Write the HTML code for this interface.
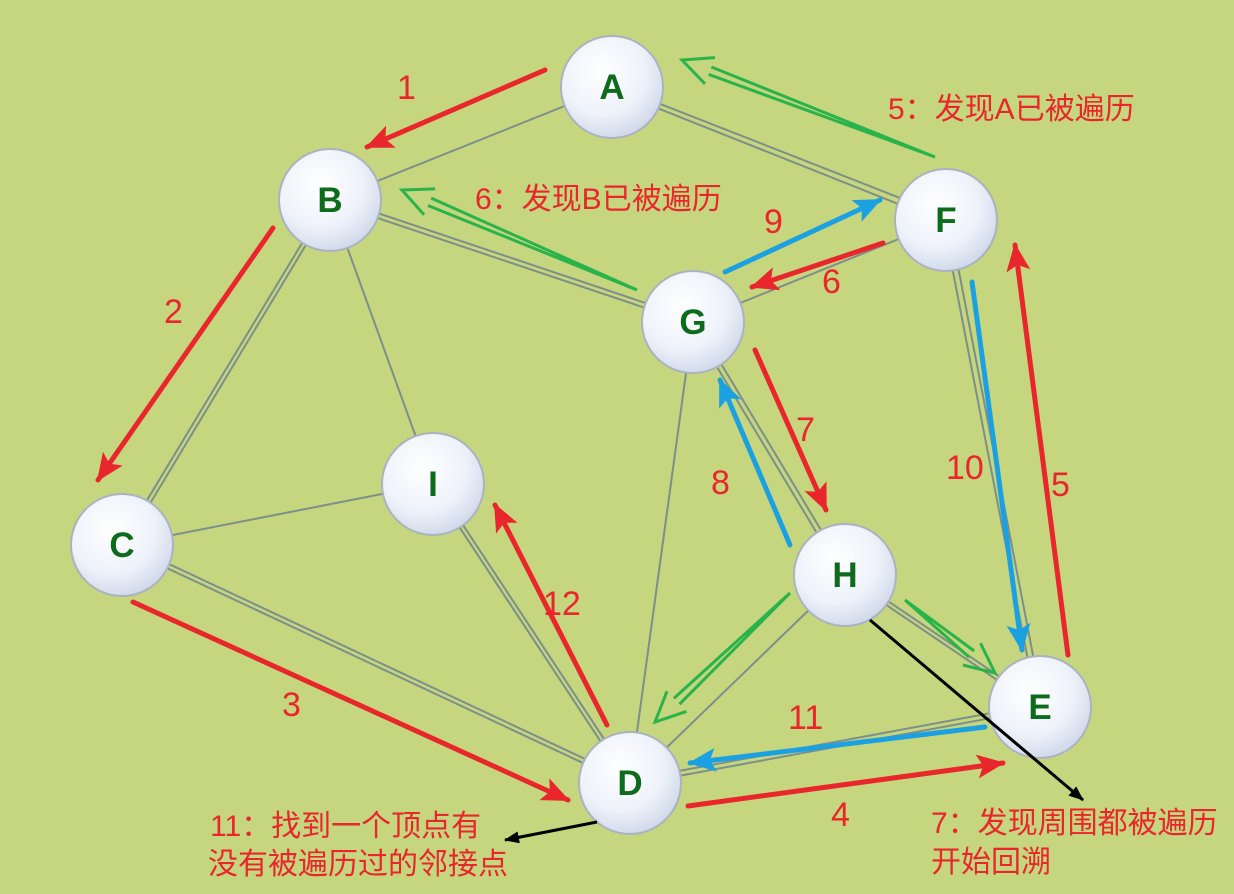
<!DOCTYPE html>
<html><head><meta charset="utf-8"><style>
html,body{margin:0;padding:0;background:#c6d67f;}
svg{display:block}
text{font-family:"Liberation Sans","Noto Sans CJK SC",sans-serif;}
</style></head><body>
<svg width="1234" height="894" viewBox="0 0 1234 894" xmlns="http://www.w3.org/2000/svg">
<defs>
<radialGradient id="ng" cx="0.4" cy="0.35" r="0.7">
<stop offset="0" stop-color="#ffffff"/><stop offset="0.6" stop-color="#eef2fa"/><stop offset="1" stop-color="#cdd6e8"/>
</radialGradient>
<marker id="mr" markerUnits="userSpaceOnUse" markerWidth="30" markerHeight="24" refX="26" refY="12" orient="auto"><path d="M0,0 L28,12 L0,24 L6,12 Z" fill="#e8262b"/></marker>
<marker id="mb" markerUnits="userSpaceOnUse" markerWidth="30" markerHeight="24" refX="26" refY="12" orient="auto"><path d="M0,0 L28,12 L0,24 L6,12 Z" fill="#1ba1e2"/></marker>
<marker id="mk" markerUnits="userSpaceOnUse" markerWidth="16" markerHeight="12" refX="14" refY="6" orient="auto"><path d="M0,0 L15,6 L0,12 Z" fill="#000"/></marker>
</defs>
<rect width="1234" height="894" fill="#c6d67f"/>
<g stroke="#7d8f8a" stroke-width="2" fill="none">
<line x1="612" y1="87" x2="330" y2="200"/>
<line x1="612" y1="85" x2="946" y2="216"/><line x1="612" y1="90" x2="946" y2="223"/>
<line x1="328" y1="200" x2="120" y2="545"/><line x1="333" y1="200" x2="125" y2="545"/>
<line x1="330" y1="200" x2="433" y2="484"/>
<line x1="330" y1="197" x2="693" y2="319"/><line x1="330" y1="202" x2="693" y2="324"/>
<line x1="122" y1="545" x2="433" y2="484"/>
<line x1="122" y1="542" x2="630" y2="780"/><line x1="122" y1="547" x2="630" y2="785"/>
<line x1="431" y1="484" x2="628" y2="783"/><line x1="436" y1="484" x2="633" y2="783"/>
<line x1="693" y1="322" x2="630" y2="783"/>
<line x1="693" y1="322" x2="946" y2="220"/>
<line x1="690" y1="322" x2="842" y2="575"/><line x1="696" y1="322" x2="848" y2="575"/>
<line x1="845" y1="575" x2="630" y2="783"/>
<line x1="845" y1="572" x2="1040" y2="704"/><line x1="845" y1="577" x2="1040" y2="709"/>
<line x1="943" y1="220" x2="1037" y2="707"/><line x1="949" y1="220" x2="1043" y2="707"/>
<line x1="630" y1="780" x2="1040" y2="704"/><line x1="630" y1="785" x2="1040" y2="709"/>
</g>
<g stroke="#e8262b" stroke-width="5" stroke-linecap="round" marker-end="url(#mr)">
<line x1="545" y1="70" x2="367" y2="147"/>
<line x1="273" y1="228" x2="98" y2="480"/>
<line x1="133" y1="602" x2="568" y2="800"/>
<line x1="688" y1="806" x2="1003" y2="763"/>
<line x1="1068" y1="655" x2="1015" y2="245"/>
<line x1="883" y1="243" x2="752" y2="287"/>
<line x1="755" y1="350" x2="826" y2="510"/>
<line x1="607" y1="725" x2="495" y2="505"/>
</g>
<g stroke="#1ba1e2" stroke-width="5" stroke-linecap="round" marker-end="url(#mb)">
<line x1="725" y1="272" x2="880" y2="200"/>
<line x1="790" y1="545" x2="720" y2="380"/>
<line x1="972" y1="282" x2="1022" y2="650"/>
<line x1="985" y1="727" x2="690" y2="763"/>
</g>
<g stroke="#2ab34a" stroke-width="3" fill="none">
<path d="M715,57.6 L682,60 L705,83.8 M935,157 L711.4,67 M935,157 L708.6,74.4"/>
<path d="M435.1,188.9 L402,190 L424.1,214.7 M637,290 L431.2,198.1 M637,290 L428,205.5"/>
<path d="M686.4,711.4 L655,722 L667,691.2 M790,593 L679.5,704.2 M790,593 L673.9,698.4"/>
<path d="M962.9,665 L995,673 L980.5,643.2 M905,600 L969.2,657.2 M905,600 L974.2,651"/>
</g>
<g fill="url(#ng)" stroke="#aab3bf" stroke-width="2">
<circle cx="612" cy="87" r="51"/><circle cx="330" cy="200" r="51"/><circle cx="122" cy="545" r="51"/>
<circle cx="433" cy="484" r="51"/><circle cx="693" cy="322" r="51"/><circle cx="946" cy="220" r="51"/>
<circle cx="845" cy="575" r="51"/><circle cx="1040" cy="707" r="51"/><circle cx="630" cy="783" r="51"/>
</g>
<g stroke="#000" stroke-width="3" marker-end="url(#mk)">
<line x1="870" y1="620" x2="1083" y2="800"/>
<line x1="597" y1="822" x2="505" y2="840"/>
</g>
<g fill="#0d6b1c" font-size="35" text-anchor="middle" font-weight="bold">
<text x="612" y="99">A</text><text x="330" y="212">B</text><text x="122" y="557">C</text>
<text x="433" y="496">I</text><text x="693" y="334">G</text><text x="946" y="232">F</text>
<text x="845" y="587">H</text><text x="1040" y="719">E</text><text x="630" y="795">D</text>
</g>
<g fill="#e8262b" font-size="34">
<text x="397" y="99">1</text><text x="164" y="323">2</text><text x="282" y="716">3</text>
<text x="831" y="826">4</text><text x="1051" y="496">5</text><text x="822" y="293">6</text>
<text x="796" y="441">7</text><text x="711" y="494">8</text><text x="764" y="233">9</text>
<text x="946" y="479">10</text><text x="788" y="729">11</text><text x="543" y="615">12</text>
</g>
<g fill="#e8262b" font-size="30">
<text x="888" y="119">5：发现A已被遍历</text>
<text x="475" y="209">6：发现B已被遍历</text>
<text x="931" y="833">7：发现周围都被遍历</text>
<text x="931" y="872">开始回溯</text>
<text x="210" y="836">11：找到一个顶点有</text>
<text x="208" y="874">没有被遍历过的邻接点</text>
</g>
</svg>
</body></html>
